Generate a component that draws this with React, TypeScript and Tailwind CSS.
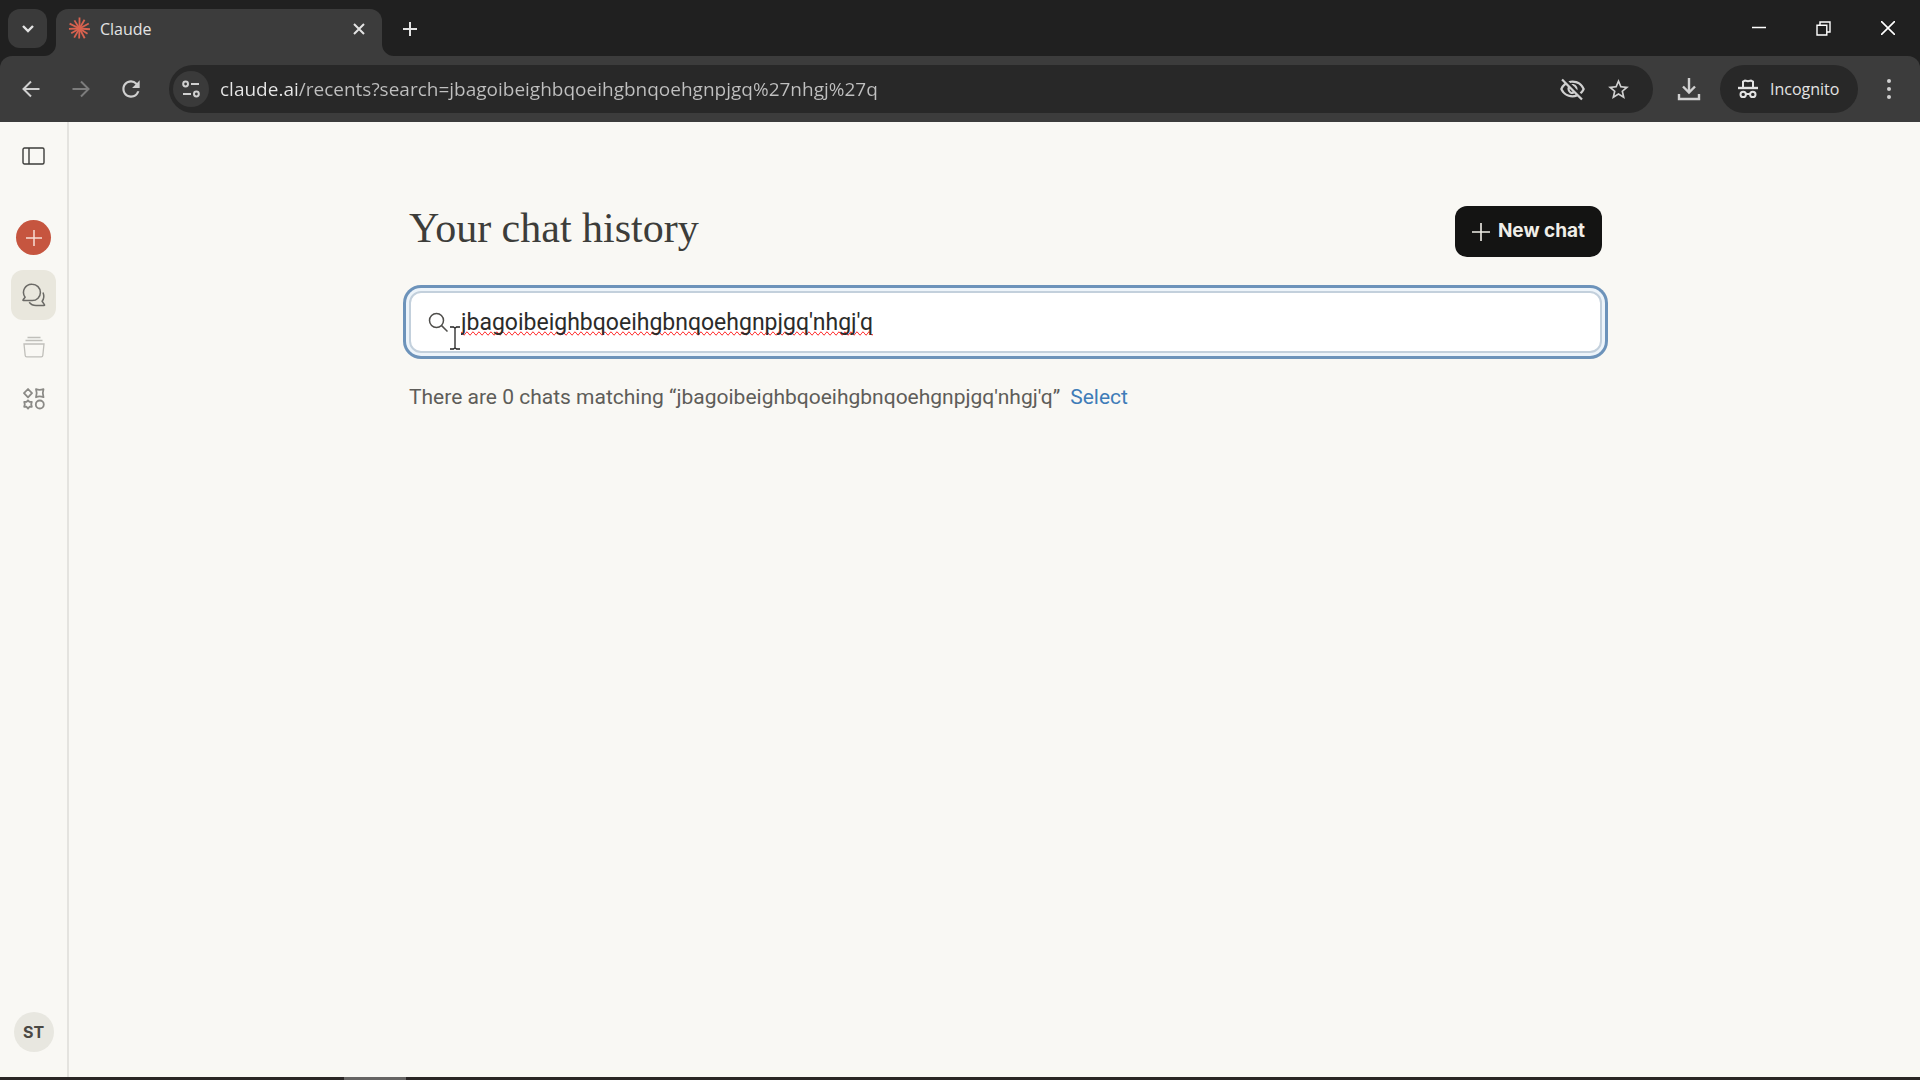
import { useState } from 'react';
import { MdOutlineVisibilityOff, MdRefresh, MdStarBorder } from 'react-icons/md';

const ClaudeMark = () => {
  const rays = [
    [4, 11], [33, 10], [62, 11.5], [92, 10.5], [120, 11], [150, 10],
    [178, 11], [206, 11.5], [238, 10], [270, 11.5], [300, 10.5], [332, 11],
  ];
  return (
    <svg viewBox="0 0 24 24" className="size-[23px] shrink-0" stroke="#d9624f" strokeWidth="1.9">
      {rays.map(([angle, length]) => (
        <line key={angle} x1="12" y1="12" x2={12 + length} y2="12" transform={`rotate(${angle} 12 12)`} />
      ))}
    </svg>
  );
};

const TabBar = () => (
  <header className="flex h-14 items-start bg-[#202020] pl-2 pt-[9px] text-[#e3e3e3]">
    <button aria-label="Search tabs" className="flex size-[39px] items-center justify-center rounded-xl bg-[#3a3a3a]">
      <svg viewBox="0 0 12 8" className="h-2 w-3" fill="none" stroke="currentColor" strokeWidth="2.4">
        <path d="M1 1l5 5 5-5" />
      </svg>
    </button>
    <div className="relative ml-[9px] flex h-[47px] w-[326px] items-start rounded-t-xl bg-[#3c3c3c] pl-3 pr-3">
      <svg viewBox="0 0 12 12" className="absolute -left-3 bottom-0 size-3" fill="#3c3c3c">
        <path d="M12 0v12H0A12 12 0 0 0 12 0z" />
      </svg>
      <svg viewBox="0 0 12 12" className="absolute -right-3 bottom-0 size-3" fill="#3c3c3c">
        <path d="M0 0v12h12A12 12 0 0 1 0 0z" />
      </svg>
      <div className="flex h-[39px] w-full items-center">
        <ClaudeMark />
        <span className="ml-[9px] flex-1 text-base">Claude</span>
        <button aria-label="Close tab" className="flex size-[22px] items-center justify-center">
          <svg viewBox="0 0 12 12" className="size-3" stroke="currentColor" strokeWidth="2">
            <path d="M1 1l10 10M11 1L1 11" />
          </svg>
        </button>
      </div>
    </div>
    <button aria-label="New tab" className="ml-2 flex size-10 items-center justify-center">
      <svg viewBox="0 0 14 14" className="size-[14px]" stroke="currentColor" strokeWidth="2">
        <path d="M7 0v14M0 7h14" />
      </svg>
    </button>
    <div className="ml-auto flex text-white">
      <button aria-label="Minimize" className="flex h-[38px] w-[65px] items-center justify-center">
        <svg viewBox="0 0 14 14" className="size-[14px]" stroke="currentColor" strokeWidth="1.5">
          <path d="M0 6.5h14" />
        </svg>
      </button>
      <button aria-label="Restore" className="flex h-[38px] w-[65px] items-center justify-center">
        <svg viewBox="0 0 15 15" className="size-[15px]" fill="none" stroke="currentColor" strokeWidth="1.4">
          <path d="M1 4.2h9.8V14H1zM4 4.2V1h10v10h-3.2" />
        </svg>
      </button>
      <button aria-label="Close window" className="flex h-[38px] w-[64px] items-center justify-center">
        <svg viewBox="0 0 14 14" className="size-[14px]" stroke="currentColor" strokeWidth="1.6">
          <path d="M0 0l14 14M14 0L0 14" />
        </svg>
      </button>
    </div>
  </header>
);

const Toolbar = () => {
  const [url, setUrl] = useState('claude.ai/recents?search=jbagoibeighbqoeihgbnqoehgnpjgq%27nhgj%27q');

  return (
    <div className="bg-[#202020]">
      <nav className="flex h-[66px] items-center rounded-t-xl bg-[#3c3c3c] px-[11px] text-[#d0d0d0]">
        <div className="flex gap-[10px]">
          <button aria-label="Back" className="flex size-10 items-center justify-center">
            <svg viewBox="0 0 18 18" className="size-[18px]" fill="none" stroke="currentColor" strokeWidth="2">
              <path d="M17.5 9H2M9 1.5L1.5 9 9 16.5" />
            </svg>
          </button>
          <button aria-label="Forward" className="flex size-10 items-center justify-center text-[#7c7c7c]">
            <svg viewBox="0 0 18 18" className="size-[18px]" fill="none" stroke="currentColor" strokeWidth="2">
              <path d="M.5 9H16M9 1.5L16.5 9 9 16.5" />
            </svg>
          </button>
          <button aria-label="Reload" className="flex size-10 items-center justify-center">
            <MdRefresh className="size-[26px]" />
          </button>
        </div>
        <div className="ml-[18px] flex h-12 flex-1 items-center rounded-full bg-[#282828] pl-1 pr-3">
          <button aria-label="View site information" className="flex size-9 items-center justify-center rounded-full bg-[#3a3a3a]">
            <svg viewBox="0 0 18 18" className="size-[18px]" fill="none" stroke="currentColor" strokeWidth="2">
              <circle cx="3.6" cy="4" r="2.4" />
              <path d="M9 4h8M1 14h8" />
              <circle cx="14.4" cy="14" r="2.4" />
            </svg>
          </button>
          <input
            aria-label="Address"
            value={url}
            onChange={(e) => setUrl(e.target.value)}
            spellCheck={false}
            className="ml-[11px] min-w-0 flex-1 bg-linear-to-r from-[#e8e8e8] from-[79px] to-[#c0c0c0] to-[79px] bg-clip-text text-[19px] text-transparent outline-none"
          />
          <button aria-label="Third-party cookies blocked" className="flex h-10 w-[46px] items-center justify-center">
            <MdOutlineVisibilityOff className="size-[27px]" />
          </button>
          <button aria-label="Bookmark this tab" className="flex h-10 w-[46px] items-center justify-center">
            <MdStarBorder className="size-[25px]" />
          </button>
        </div>
        <button aria-label="Downloads" className="ml-4 flex size-10 items-center justify-center">
          <svg viewBox="0 0 24 24" className="size-6" fill="none" stroke="currentColor" strokeWidth="2.4">
            <path d="M12 1v14M6 9.5l6 6 6-6M2 17v5h20v-5" />
          </svg>
        </button>
        <button className="ml-[11px] flex h-12 w-[138px] items-center rounded-full bg-[#282828] pl-[18px] text-base text-[#e3e3e3]">
          <svg viewBox="0 0 20 20" className="size-5" fill="none" stroke="currentColor" strokeWidth="2">
            <path d="M5 8V2.500l2-1 3 .800 3-.800 2 1V8" />
            <path d="M0 9h20" strokeWidth="2.400" />
            <circle cx="5.200" cy="15.400" r="2.700" />
            <circle cx="14.800" cy="15.400" r="2.700" />
            <path d="M8 15h4" />
          </svg>
          <span className="ml-3">Incognito</span>
        </button>
        <button aria-label="Menu" className="ml-[11px] flex size-10 items-center justify-center">
          <svg viewBox="0 0 6 22" className="h-[22px] w-[6px]" fill="currentColor">
            <circle cx="3" cy="3" r="2" />
            <circle cx="3" cy="11" r="2" />
            <circle cx="3" cy="19" r="2" />
          </svg>
        </button>
      </nav>
    </div>
  );
};

const Sidebar = () => (
  <aside className="flex w-[69px] shrink-0 flex-col items-center border-r-2 border-[#e4e3df] pb-[25px] pt-[14px] text-[#6b6a66]">
    <button aria-label="Open sidebar" className="flex size-10 items-center justify-center text-[#3d3d3a]">
      <svg viewBox="0 0 23 18" className="h-[18px] w-[23px]" fill="none" stroke="currentColor" strokeWidth="1.4">
        <rect x="1" y="1" width="21" height="16" rx="1.5" />
        <path d="M7 1v16" />
      </svg>
    </button>
    <button aria-label="New chat" className="mt-11 flex size-[35px] items-center justify-center rounded-full bg-[#c6553f] text-[#f7ddd5]">
      <svg viewBox="0 0 16 16" className="size-4" stroke="currentColor" strokeWidth="1.5">
        <path d="M8 0v16M0 8h16" />
      </svg>
    </button>
    <nav className="mt-[15px] flex flex-col items-center gap-[2px]">
      <a href="#chats" aria-label="Chats" className="flex h-[50px] w-[45px] items-center justify-center rounded-xl bg-[#e9e7dd]">
        <svg viewBox="0 0 24 24" className="size-6" fill="none" stroke="currentColor" strokeWidth="1.5" strokeLinejoin="round">
          <path d="M10.2 1.2a8.2 8.2 0 0 1 0 16.4H1.4c-.5 0-.6-.5-.3-.8l2-2.6A8.2 8.2 0 0 1 10.2 1.2z" />
          <path d="M21 9.5c1.2 3 1 6.400-.9 8.800l2.300 3.300c.4.6.2 1-.4 1H14c-3 0-5.300-1.300-6.800-3.300" />
        </svg>
      </a>
      <a href="#projects" aria-label="Projects" className="flex h-[50px] w-[45px] items-center justify-center text-[#c0bfba]">
        <svg viewBox="0 0 22 22" className="size-[22px]" fill="none" stroke="currentColor" strokeWidth="1.3">
          <path d="M4.500 1.500h13M2.500 4.500h17M1 8h20l-1.200 11.500a1.500 1.500 0 0 1-1.500 1.400H3.700a1.500 1.500 0 0 1-1.500-1.400z" />
        </svg>
      </a>
      <a href="#artifacts" aria-label="Artifacts" className="flex h-[50px] w-[45px] items-center justify-center text-[#8b8a86]">
        <svg viewBox="0 0 22 22" className="size-[22px]" fill="none" stroke="currentColor" strokeWidth="1.8" strokeLinejoin="round">
          <path d="M5 1l4 4.200-4 4.200-4-4.200z" />
          <path d="M13 1.200c2.400 1 4.800 1 7.500 0-1 2.700-1 5.400 0 8-2.700-1-5.100-1-7.500 0 1-2.600 1-5.300 0-8z" />
          <path d="M5 12.300l1.500 1.600 2.300-.1-.6 2.500.6 2.500-2.300-.1L5 20.600l-1.500-1.900-2.300.1.600-2.500-.6-2.500 2.300.1z" />
          <circle cx="16.800" cy="16.500" r="4" />
        </svg>
      </a>
    </nav>
    <button aria-label="Account" className="mt-auto flex size-10 items-center justify-center rounded-full bg-[#e8e7e0] font-['Inter',sans-serif] text-base font-bold text-[#4a4843]">
      ST
    </button>
  </aside>
);

const ChatHistory = () => {
  const [search, setSearch] = useState("jbagoibeighbqoeihgbnqoehgnpjgq'nhgj'q");

  return (
    <main className="flex-1 pl-[22px] pt-[84px] font-['Roboto',sans-serif]">
      <div className="mx-auto max-w-[1193px]">
        <div className="flex items-start justify-between">
          <h1 className="font-['Liberation_Serif',serif] text-[42px] leading-[44px] text-[#3d3d3a]">Your chat history</h1>
          <button className="flex h-[51px] w-[147px] items-center justify-center rounded-xl bg-[#141413] font-['Inter',sans-serif] text-[19px] font-bold text-[#f0eee8]">
            <svg viewBox="0 0 18 18" className="mr-2 size-[18px]" stroke="currentColor" strokeWidth="1.6">
              <path d="M9 0v18M0 9h18" />
            </svg>
            New chat
          </button>
        </div>
        <div className="relative mt-[34px] flex h-[62px] items-center rounded-xl border-2 border-[#c3d0dc] bg-white pl-[17px] ring-3 ring-[#6d93ba] ring-offset-3 ring-offset-[#edf4fa]">
          <svg viewBox="0 0 20 20" className="size-5 shrink-0" fill="none" stroke="#4f4e4b" strokeWidth="1.5">
            <circle cx="8.500" cy="8.500" r="7" />
            <path d="M13.600 13.600L19.500 19.500" />
          </svg>
          <input
            aria-label="Search your chats"
            value={search}
            onChange={(e) => setSearch(e.target.value)}
            spellCheck={false}
            className="ml-[13px] h-12 min-w-0 flex-1 text-[23px] text-[#2b2b2a] outline-none [text-decoration-line:spelling-error]"
          />
          {/* text cursor */}
          <svg viewBox="0 0 10 24" className="absolute left-[39px] top-[33px] h-6 w-[10px]" fill="none" stroke="#222" strokeWidth="1.300">
            <path d="M0 1h3.500L5 2.200 6.500 1H10M5 2v20M0 23h3.500L5 21.800 6.500 23H10" />
          </svg>
        </div>
        <p className="mt-[30px] text-[21px] leading-7 text-[#5e5d59]">
          There are 0 chats matching “{search}”
          <button className="ml-[10px] text-[#3f7cb8]">Select</button>
        </p>
      </div>
    </main>
  );
};

const App = () => (
  <div className="flex h-screen flex-col bg-[#f9f8f4] font-['Open_Sans',sans-serif]">
    <TabBar />
    <Toolbar />
    <div className="flex min-h-0 flex-1">
      <Sidebar />
      <ChatHistory />
    </div>
    <footer className="h-[3px] bg-[#2a2625] pl-[344px]">
      <div className="h-full w-[62px] bg-[#666463]" />
    </footer>
  </div>
);

export default App;
